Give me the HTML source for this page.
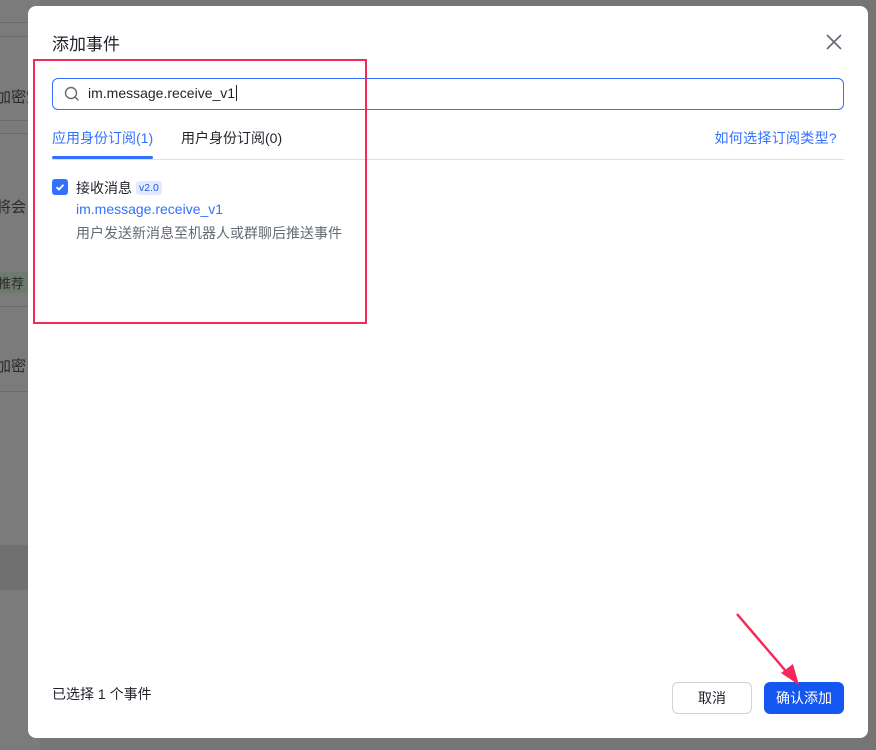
<!DOCTYPE html>
<html><head><meta charset="utf-8"><style>
*{box-sizing:border-box;margin:0;padding:0}
body{width:876px;height:750px;overflow:hidden;background:#757575;font-family:"Liberation Sans","Noto Sans CJK SC",sans-serif;position:relative}
.bg{position:absolute;left:0;top:0;width:40px;height:750px;background:#7b7b7b;color:#2a2a2a;font-size:15px}
.bg .l{position:absolute;left:0;width:40px;height:1px;background:#6b6b6b}
.bg span{position:absolute;left:-4px;white-space:nowrap}
.modal{position:absolute;left:28px;top:6px;width:840px;height:732px;background:#fff;border-radius:8px}
.t{position:absolute;left:24px;top:24px;font-size:17px;color:#1f2329}
.x{position:absolute;left:798px;top:28px}
.search{position:absolute;left:24px;top:72px;width:792px;height:32px;border:1px solid #3370ff;border-radius:6px}
.search .txt{position:absolute;left:35px;top:6px;font-size:14px;color:#1f2329}
.tabs{position:absolute;left:24px;top:122px;width:792px;height:32px;border-bottom:1px solid #dee0e3;font-size:14px}
.tab1{position:absolute;left:0;top:0;color:#3370ff}
.ul{position:absolute;left:0;top:28px;width:101px;height:3px;background:#3370ff;border-radius:2px}
.tab2{position:absolute;left:129px;top:0;color:#1f2329}
.help{position:absolute;right:7px;top:0;color:#3370ff;letter-spacing:0.3px}
.cb{position:absolute;left:24px;top:173px;width:16px;height:16px;background:#3370ff;border-radius:3px}
.name{position:absolute;left:48px;top:172px;font-size:14px;color:#1f2329}
.tag{display:inline-block;font-size:10.5px;background:#e1eaff;color:#245bdb;padding:1px 3px;border-radius:3px;margin-left:4px;vertical-align:2px}
.k{position:absolute;left:48px;top:195px;font-size:14px;color:#3370ff}
.d{position:absolute;left:48px;top:217px;font-size:14px;color:#646a73}
.red{position:absolute;left:33px;top:59px;width:334px;height:265px;border:2px solid #f5295a}
.sel{position:absolute;left:24px;top:678px;font-size:14px;color:#1f2329}
.b1{position:absolute;left:644px;top:676px;width:80px;height:32px;border:1px solid #d0d3d6;border-radius:6px;font-size:14px;text-align:center;line-height:30px;color:#1f2329}
.b2{position:absolute;left:736px;top:676px;width:80px;height:32px;background:#1456f0;border-radius:6px;font-size:14px;text-align:center;line-height:32px;color:#fff}
</style></head><body>
<div class="bg">
<div class="l" style="top:22px"></div><div class="l" style="top:36px"></div><div class="l" style="top:120px"></div><div class="l" style="top:133px"></div><div class="l" style="top:306px"></div><div class="l" style="top:391px"></div>
<div style="position:absolute;left:0;top:545px;width:40px;height:45px;background:#707070"></div>
<span style="top:86px">加密策</span><span style="top:196px">将会</span>
<span style="top:272px;left:-6px;background:#6f7a6e;padding:1px 4px;font-size:13px">推荐</span>
<span style="top:355px">加密</span>
</div>
<div class="modal">
<div class="t">添加事件</div>
<svg class="x" width="16" height="16" viewBox="0 0 16 16"><path d="M1 1L15 15M15 1L1 15" stroke="#646a73" stroke-width="1.6"/></svg>
<div class="search">
<svg style="position:absolute;left:11px;top:7px" width="16" height="16" viewBox="0 0 16 16"><circle cx="7" cy="7" r="5.5" fill="none" stroke="#646a73" stroke-width="1.4"/><path d="M11 11L14.5 14.5" stroke="#646a73" stroke-width="1.4"/></svg>
<div class="txt">im.message.receive_v1<span style="border-left:1px solid #1f2329;margin-left:1px"></span></div>
</div>
<div class="tabs"><div class="tab1">应用身份订阅(1)</div><div class="ul"></div><div class="tab2">用户身份订阅(0)</div><div class="help">如何选择订阅类型?</div></div>
<div class="cb"><svg width="16" height="16" viewBox="0 0 16 16"><path d="M4.5 8.2L7 10.5L11.5 5.8" fill="none" stroke="#fff" stroke-width="1.8"/></svg></div>
<div class="name">接收消息<span class="tag">v2.0</span></div>
<div class="k">im.message.receive_v1</div>
<div class="d">用户发送新消息至机器人或群聊后推送事件</div>
<div class="sel">已选择 1 个事件</div>
<div class="b1">取消</div>
<div class="b2">确认添加</div>
</div>
<div class="red"></div>
<svg style="position:absolute;left:0;top:0" width="876" height="750"><path d="M737 614L790 676" stroke="#f5295a" stroke-width="2.5"/><path d="M799 685L781 673L793 664Z" fill="#f5295a"/></svg>
</body></html>
